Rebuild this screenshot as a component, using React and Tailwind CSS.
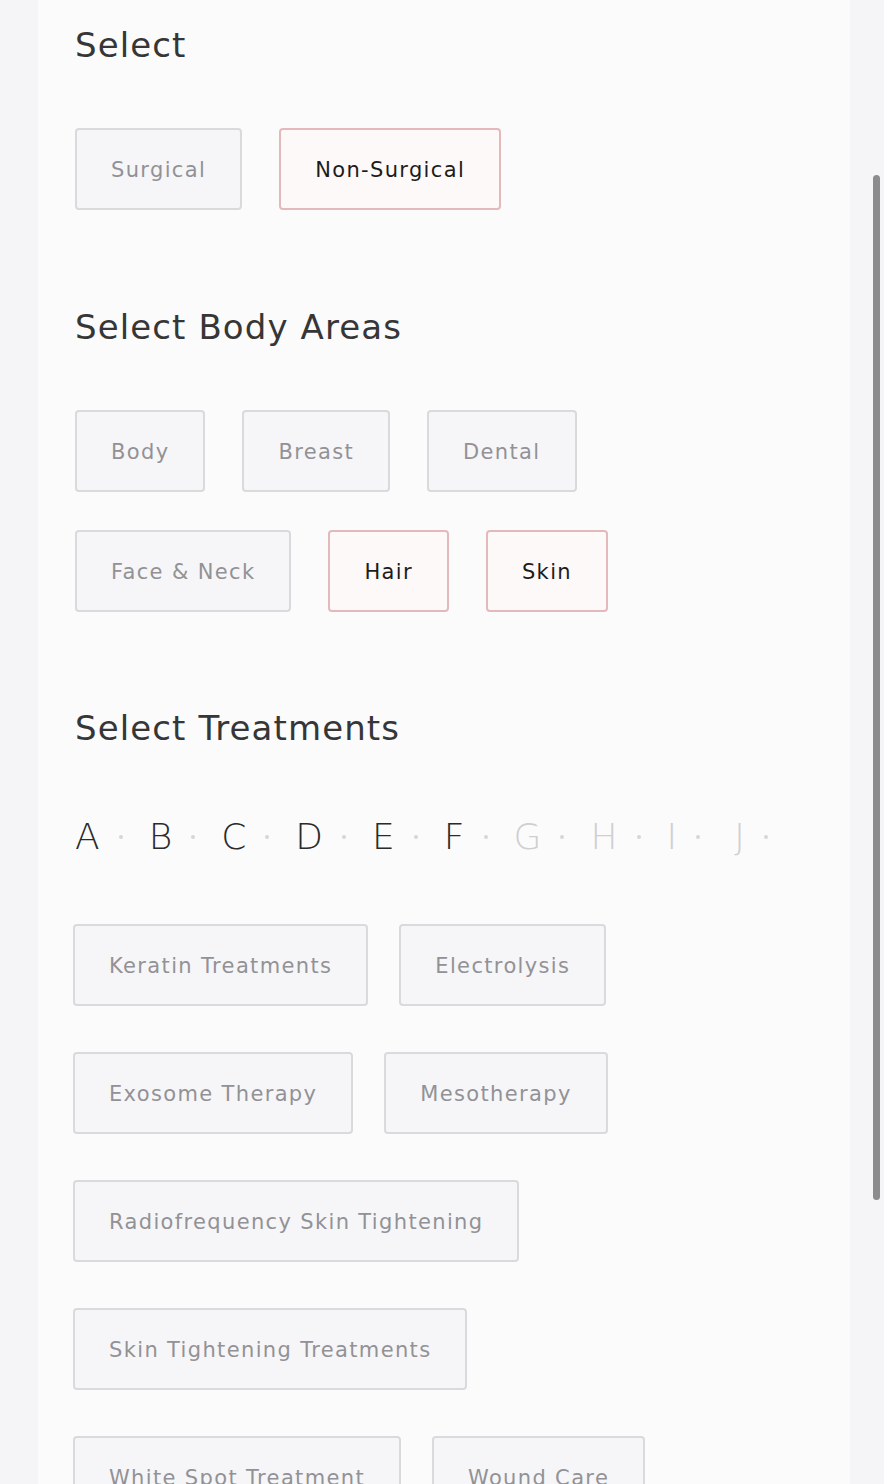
import React from 'react';

const FONT = "font-['DejaVu_Sans','Noto_Sans',sans-serif]";

const Chip = ({ label, active }) => (
  <button
    className={`h-[82px] px-[34px] pt-[4px] flex items-center justify-center whitespace-nowrap rounded-[4px] border-2 text-[21px] tracking-[1.35px] ${
      active
        ? 'border-[#e3b9bc] bg-[#fdf9f9] text-[#1c1c1c]'
        : 'border-[#dadadc] bg-[#f6f6f8] text-[#929296]'
    }`}
  >
    {label}
  </button>
);

const Heading = ({ children, className }) => (
  <h2 className={`text-[34px] leading-[40px] tracking-[1.1px] text-[#363636] ${className}`}>{children}</h2>
);

const letters = [
  { l: 'A', on: true },
  { l: 'B', on: true },
  { l: 'C', on: true },
  { l: 'D', on: true },
  { l: 'E', on: true },
  { l: 'F', on: true },
  { l: 'G', on: false },
  { l: 'H', on: false },
  { l: 'I', on: false },
  { l: 'J', on: false },
];

const treatmentRows = [
  ['Keratin Treatments', 'Electrolysis'],
  ['Exosome Therapy', 'Mesotherapy'],
  ['Radiofrequency Skin Tightening'],
  ['Skin Tightening Treatments'],
  ['White Spot Treatment', 'Wound Care'],
];

export default function App() {
  return (
    <div className={`h-[1484px] overflow-hidden flex bg-[#f5f5f7] ${FONT}`}>
      <div className="ml-[38px] w-[812px] shrink-0 bg-[#fbfbfc] pl-[37px]">
        <Heading className="mt-[25px]">Select</Heading>

        <div className="mt-[63px] flex gap-[37px]">
          <Chip label="Surgical" />
          <Chip label="Non-Surgical" active />
        </div>

        <Heading className="mt-[97px]">Select Body Areas</Heading>

        <div className="mt-[63px] flex flex-col gap-[38px]">
          <div className="flex gap-[37px]">
            <Chip label="Body" />
            <Chip label="Breast" />
            <Chip label="Dental" />
          </div>
          <div className="flex gap-[37px]">
            <Chip label="Face & Neck" />
            <Chip label="Hair" active />
            <Chip label="Skin" active />
          </div>
        </div>

        <Heading className="mt-[96px]">Select Treatments</Heading>

        <div className="mt-[69px] flex items-center h-[40px]">
          {letters.map(({ l, on }) => (
            <div key={l} className="flex items-center">
              <span
                className={`text-[36px] leading-[40px] font-extralight ${
                  on ? 'text-[#2a2a2a]' : 'text-[#cfcfd1]'
                } ${l === 'J' ? 'ml-[8px]' : ''}`}
              >
                {l}
              </span>
              <span className="ml-[19px] mr-[26px] w-[4px] h-[4px] rounded-full bg-[#d6d6d8]" />
            </div>
          ))}
        </div>

        <div className="mt-[67px] -ml-[2px] flex flex-col gap-[46px]">
          {treatmentRows.map((row, i) => (
            <div key={i} className="flex gap-[31px]">
              {row.map((t) => (
                <Chip key={t} label={t} />
              ))}
            </div>
          ))}
        </div>
      </div>

      <div className="flex-1 pt-[175px] pl-[23px]">
        <div className="w-[7px] h-[1025px] rounded-full bg-[#8c8c8e]" />
      </div>
    </div>
  );
}
